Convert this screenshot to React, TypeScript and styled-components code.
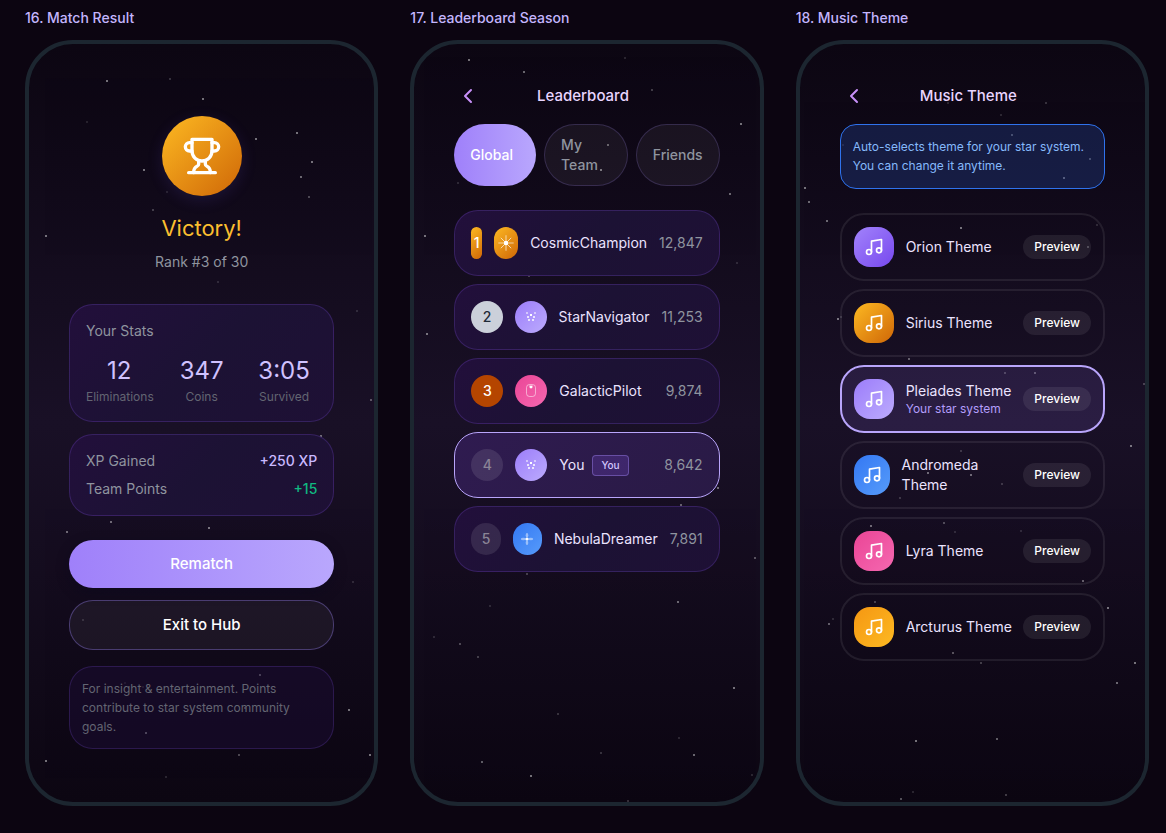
import React from 'react';
import styled, { createGlobalStyle, css } from 'styled-components';
import { ChevronLeft, Music } from 'lucide-react';

const GlobalStyle = createGlobalStyle`
  *, *::before, *::after { box-sizing: border-box; }
  body {
    margin: 0;
    background: #0c0511;
    color: #e9e2ff;
    font-family: Inter, "Liberation Sans", sans-serif;
    font-size: 14px;
    line-height: 20px;
    -webkit-font-smoothing: antialiased;
  }
  h1, h2, h3, p, ul, ol, dl, dd { margin: 0; padding: 0; font-weight: 400; }
  ul, ol { list-style: none; }
  button { border: 0; margin: 0; font: inherit; color: inherit; cursor: pointer; }
`;

const Board = styled.main`
  display: grid;
  grid-template-columns: repeat(3, minmax(0, 1fr));
  gap: 32px;
  padding: 8px 17px 24px 25px;
`;

const Screen = styled.section`
  display: flex;
  flex-direction: column;
  gap: 12px;
`;

const ScreenLabel = styled.h2`
  font-size: 14px;
  font-weight: 500;
  line-height: 20px;
  color: #c4b5fd;
`;

const Phone = styled.div`
  position: relative;
  aspect-ratio: 9 / 19.5;
  padding: 40px;
  border: 4px solid #1c2630;
  border-radius: 48px;
  overflow: hidden;
  background: linear-gradient(180deg, #0c0612 0%, #191026 50%, #0c0612 100%);
`;

const Sky = styled.svg`
  position: absolute;
  inset: 0;
  width: 100%;
  height: 100%;
  opacity: 0.85;
  pointer-events: none;
`;

const Content = styled.div`
  position: relative;
  display: flex;
  flex-direction: column;
`;

const panel = css`
  border: 1px solid rgba(139, 92, 246, 0.22);
  border-radius: 24px;
  background: linear-gradient(135deg, #220f3b 0%, #1c1234 50%, #1e1035 100%);
`;

/* Match result */

const Result = styled.div`
  display: flex;
  flex-direction: column;
  align-items: center;
  padding-top: 32px;
  margin-bottom: 32px;
`;

const Medal = styled.div`
  display: grid;
  place-items: center;
  width: 80px;
  height: 80px;
  margin-bottom: 16px;
  border-radius: 50%;
  background: linear-gradient(135deg, #fdb922, #cf6707);
  box-shadow: 0 4px 16px rgba(99, 80, 220, 0.16);
`;

const Victory = styled.h1`
  margin-bottom: 8px;
  font-size: 22px;
  line-height: 32px;
  color: #fbbf2f;
`;

const Muted = styled.p`
  color: #8f949f;
`;

const Card = styled.section`
  ${panel}
  padding: 16px;
  margin-bottom: 12px;
`;

const StatGrid = styled.dl`
  display: grid;
  grid-template-columns: repeat(3, minmax(0, 1fr));
  gap: 16px;
  margin-top: 14px;
`;

const Stat = styled.div`
  display: flex;
  flex-direction: column-reverse;
  gap: 2px;
  text-align: center;
`;

const StatValue = styled.dd`
  font-size: 24px;
  line-height: 32px;
  color: #d0c2ff;
`;

const StatLabel = styled.dt`
  font-size: 12px;
  line-height: 16px;
  color: #636572;
`;

const Gains = styled.dl`
  display: flex;
  flex-direction: column;
  gap: 8px;
`;

const Gain = styled.div`
  display: flex;
  justify-content: space-between;
  color: #8f949f;
`;

const GainValue = styled.dd<{ $positive?: boolean }>`
  font-weight: 500;
  color: ${(p) => (p.$positive ? '#10b981' : '#c9b9ff')};
`;

const Actions = styled.div`
  display: flex;
  flex-direction: column;
  gap: 12px;
  margin: 12px 0 16px;
`;

const ActionButton = styled.button<{ $primary?: boolean }>`
  padding: 12px 24px;
  border-radius: 24px;
  font-size: 15px;
  font-weight: 500;
  line-height: 24px;
  color: #fff;
  ${(p) =>
    p.$primary
      ? css`
          background: linear-gradient(90deg, #9f80fa, #b9a7fd);
          box-shadow: 0 4px 12px rgba(10, 8, 30, 0.5);
        `
      : css`
          border: 1px solid rgba(139, 116, 220, 0.42);
          background: rgba(255, 255, 255, 0.05);
        `}
`;

const Note = styled.p`
  padding: 12px;
  border: 1px solid rgba(139, 92, 246, 0.2);
  border-radius: 24px;
  background: rgba(28, 14, 56, 0.45);
  font-size: 12px;
  line-height: 19px;
  color: #636572;
`;

/* Shared screen header */

const Header = styled.header`
  display: flex;
  align-items: center;
  justify-content: space-between;
  margin-bottom: 16px;

  &::after {
    content: '';
    width: 36px;
  }
`;

const BackButton = styled.button`
  display: grid;
  place-items: center;
  width: 28px;
  height: 24px;
  padding: 0;
  background: none;
  color: #c890f8;
`;

const Title = styled.h1`
  font-size: 15px;
  font-weight: 500;
  line-height: 24px;
  color: #e9d5ff;
`;

/* Leaderboard */

const Tabs = styled.div`
  display: flex;
  gap: 8px;
  margin-bottom: 24px;
`;

const Tab = styled.button<{ $active?: boolean }>`
  flex: 1;
  padding: 10px 16px;
  border-radius: 31px;
  font-size: 14px;
  font-weight: 500;
  line-height: 20px;
  text-align: left;
  ${(p) =>
    p.$active
      ? css`
          background: linear-gradient(90deg, #9f80fa, #b9a7fd);
          color: #fff;
        `
      : css`
          border: 1px solid rgba(167, 139, 250, 0.2);
          background: rgba(255, 255, 255, 0.05);
          color: #8f949f;
        `}
`;

const List = styled.ol`
  display: flex;
  flex-direction: column;
  gap: 8px;
`;

const Player = styled.li<{ $self?: boolean }>`
  ${panel}
  display: flex;
  align-items: center;
  gap: 12px;
  padding: 16px;
  ${(p) =>
    p.$self &&
    css`
      border-color: #b9a5fb;
      background: linear-gradient(135deg, #2f1b50, #291a45);
    `}
`;

const rankStyles: Record<number, ReturnType<typeof css>> = {
  1: css`background: linear-gradient(135deg, #fdb922, #cf6707); color: #fff;`,
  2: css`background: #cbd0da; color: #1f2937;`,
  3: css`background: #b54500; color: #fff;`,
};

const Rank = styled.span<{ $rank: number }>`
  display: flex;
  align-items: center;
  justify-content: center;
  width: 32px;
  height: 32px;
  border-radius: 16px;
  font-weight: 500;
  ${(p) =>
    rankStyles[p.$rank] ??
    css`
      background: rgba(255, 255, 255, 0.1);
      color: #8a8496;
    `}
`;

const Avatar = styled.span<{ $fill: string }>`
  display: flex;
  align-items: center;
  justify-content: center;
  width: 32px;
  height: 32px;
  border-radius: 16px;
  background: ${(p) => p.$fill};

  svg { flex: none; }
`;

const PlayerName = styled.span`
  display: flex;
  flex: 1;
  align-items: center;
  gap: 8px;
  color: #ebe3ff;
`;

const YouTag = styled.span`
  padding: 2px 8px;
  border: 1px solid rgba(167, 139, 250, 0.4);
  border-radius: 4px;
  background: rgba(139, 92, 246, 0.2);
  font-size: 10px;
  font-weight: 500;
  line-height: 15px;
  color: #d4c6ff;
`;

const Score = styled.span`
  color: #8f949f;
`;

/* Music theme */

const Info = styled.p`
  min-height: 65px;
  padding: 12px;
  margin-bottom: 24px;
  border: 1px solid #2f72ec;
  border-radius: 16px;
  background: rgba(37, 70, 160, 0.32);
  font-size: 12px;
  line-height: 19px;
  color: #85b9fb;
`;

const ThemeRow = styled.li<{ $active?: boolean }>`
  display: flex;
  align-items: center;
  gap: 8px;
  padding: 12px;
  border: 2px solid ${(p) => (p.$active ? '#b9a5fb' : 'rgba(255, 255, 255, 0.08)')};
  border-radius: 24px;
  background: ${(p) => (p.$active ? 'rgba(139, 110, 230, 0.15)' : 'transparent')};
`;

const ThemeArt = styled.span<{ $fill: string }>`
  display: flex;
  align-items: center;
  justify-content: center;
  width: 40px;
  height: 40px;
  margin-right: 4px;
  border-radius: 16px;
  background: ${(p) => p.$fill};
  color: #fff;
`;

const ThemeText = styled.div`
  flex: 1 1 auto;
`;

const ThemeName = styled.h3`
  font-size: 14px;
  line-height: 20px;
  color: #ebe3ff;
`;

const ThemeHint = styled.p`
  font-size: 12px;
  line-height: 16px;
  color: #b39dfb;
`;

const PreviewButton = styled.button`
  padding: 4px 11px;
  border-radius: 12px;
  background: rgba(255, 255, 255, 0.08);
  font-size: 12px;
  font-weight: 500;
  line-height: 16px;
  color: #fff;
`;

const fills = {
  orion: 'linear-gradient(135deg, #a283fb, #7748ee)',
  sirius: 'linear-gradient(135deg, #fdb922, #cf6707)',
  pleiades: 'linear-gradient(135deg, #9c7dfa, #bcabfd)',
  andromeda: 'linear-gradient(135deg, #3478f3, #569bfa)',
  lyra: 'linear-gradient(135deg, #ea4596, #f568b0)',
  arcturus: 'linear-gradient(135deg, #f59712, #fdb922)',
};

type Star = [x: number, y: number, opacity: number];

const skies: Record<string, Star[]> = {
  result: [
    [77, 36, 0.5], [140, 34, 0.2], [173, 54, 0.5], [57, 77, 0.12], [267, 88, 0.5], [226, 94, 0.5],
    [282, 117, 0.5], [271, 132, 0.45], [279, 152, 0.3], [114, 125, 0.5], [137, 147, 0.12], [123, 165, 0.25],
    [16, 191, 0.5], [188, 237, 0.15], [194, 213, 0.35], [327, 266, 0.15], [341, 355, 0.35], [291, 391, 0.45],
    [81, 477, 0.45], [179, 483, 0.5], [37, 487, 0.45], [323, 537, 0.15], [53, 575, 0.15], [230, 630, 0.45],
    [95, 638, 0.12], [113, 642, 0.12], [215, 663, 0.4], [177, 663, 0.15], [319, 665, 0.5], [116, 688, 0.5],
    [63, 680, 0.15], [340, 710, 0.5], [209, 710, 0.3], [136, 732, 0.15], [16, 716, 0.5],
  ],
  leaderboard: [
    [54, 15, 0.5], [109, 27, 0.45], [210, 13, 0.15], [237, 45, 0.25], [326, 79, 0.5], [193, 100, 0.4],
    [186, 125, 0.5], [315, 149, 0.45], [43, 138, 0.15], [322, 218, 0.15], [114, 231, 0.25], [10, 191, 0.5],
    [12, 289, 0.5], [303, 443, 0.45], [266, 460, 0.4], [112, 529, 0.25], [340, 513, 0.35], [263, 557, 0.45],
    [75, 561, 0.15], [45, 599, 0.3], [19, 592, 0.15], [63, 612, 0.25], [319, 643, 0.5], [143, 669, 0.2],
    [264, 693, 0.15], [186, 708, 0.2], [279, 710, 0.45], [337, 730, 0.15], [67, 717, 0.4], [116, 731, 0.5],
    [213, 756, 0.2],
  ],
  music: [
    [245, 58, 0.2], [200, 70, 0.15], [147, 58, 0.15], [211, 90, 0.35], [289, 114, 0.35], [263, 133, 0.45],
    [42, 100, 0.12], [4, 143, 0.5], [8, 157, 0.45], [26, 176, 0.45], [160, 183, 0.5], [296, 180, 0.15],
    [287, 202, 0.25], [37, 274, 0.5], [40, 272, 0.15], [108, 314, 0.4], [204, 328, 0.25], [234, 328, 0.35],
    [343, 339, 0.25], [160, 406, 0.2], [127, 428, 0.45], [170, 430, 0.45], [201, 439, 0.2], [99, 453, 0.2],
    [70, 481, 0.45], [143, 478, 0.3], [154, 487, 0.15], [220, 486, 0.15], [282, 536, 0.4], [307, 563, 0.5],
    [74, 557, 0.25], [32, 574, 0.15], [28, 579, 0.4], [152, 608, 0.35], [180, 618, 0.25], [330, 401, 0.5],
    [316, 638, 0.45], [334, 618, 0.5], [115, 696, 0.5], [196, 694, 0.4], [100, 754, 0.35], [112, 747, 0.15],
    [205, 750, 0.25],
  ],
};

const StarField = ({ stars }: { stars: Star[] }) => (
  <Sky aria-hidden="true" shapeRendering="crispEdges">
    {stars.map(([x, y, opacity]) => (
      <rect key={`${x}-${y}`} x={x} y={y} width="2" height="2" fill="#fff" opacity={opacity} />
    ))}
  </Sky>
);

const TrophyIcon = () => (
  <svg width="40" height="40" viewBox="0 0 24 24" fill="none" stroke="#fff" strokeWidth="2" strokeLinecap="round" strokeLinejoin="round" aria-hidden="true">
    <path d="M6 9H4.5a2.5 2.5 0 0 1 0-5H6" />
    <path d="M18 9h1.5a2.5 2.5 0 0 0 0-5H18" />
    <path d="M4 22h16" />
    <path d="M10 14.66V17c0 .55-.47.98-.97 1.21C7.85 18.75 7 20.24 7 22" />
    <path d="M14 14.66V17c0 .55.47.98.97 1.21C16.15 18.75 17 20.24 17 22" />
    <path d="M18 2H6v7a6 6 0 0 0 12 0V2Z" />
  </svg>
);

type SystemName = 'sirius' | 'pleiades' | 'lyra' | 'andromeda';

const SystemIcon = ({ name }: { name: SystemName }) => (
  <svg width="24" height="24" viewBox="0 0 24 24" fill="#fff" aria-hidden="true">
    {name === 'sirius' && (
      <>
        <circle cx="12" cy="12" r="2.2" />
        <path d="M12 4.3v15.4M4.3 12h15.4" stroke="#fff" strokeWidth="1.6" opacity="0.4" />
        <path d="M6.8 6.8l10.4 10.4M17.2 6.8L6.8 17.2" stroke="#fff" strokeWidth="0.9" opacity="0.75" />
      </>
    )}
    {name === 'pleiades' && (
      <>
        <rect x="11" y="9" width="2" height="2" />
        <g opacity="0.5">
          <rect x="7" y="7" width="2" height="2" />
          <rect x="15" y="7" width="2" height="2" />
        </g>
        <g opacity="0.75">
          <rect x="8" y="11" width="2" height="2" />
          <rect x="14" y="11" width="2" height="2" />
          <rect x="9" y="14" width="2" height="2" />
          <rect x="13" y="14" width="2" height="2" />
        </g>
      </>
    )}
    {name === 'lyra' && (
      <>
        <rect x="7.5" y="5.5" width="9" height="12" rx="3" fill="none" stroke="#fff" strokeWidth="1" opacity="0.5" />
        <path d="M10.5 6v2.5M13.5 6v2.5" stroke="#fff" strokeWidth="0.7" opacity="0.4" />
        <circle cx="12" cy="8" r="1.4" />
      </>
    )}
    {name === 'andromeda' && (
      <>
        <g opacity="0.45">
          <ellipse cx="12" cy="8.3" rx="1.3" ry="2.3" />
          <ellipse cx="12" cy="15.7" rx="1.3" ry="2.3" />
          <ellipse cx="8.3" cy="12" rx="2.5" ry="1.3" />
          <ellipse cx="15.7" cy="12" rx="2.5" ry="1.3" />
        </g>
        <circle cx="12" cy="12" r="1.6" />
      </>
    )}
  </svg>
);

const ScreenHeader = ({ title }: { title: string }) => (
  <Header>
    <BackButton type="button" aria-label="Back">
      <ChevronLeft size={24} />
    </BackButton>
    <Title>{title}</Title>
  </Header>
);

const stats = [
  { label: 'Eliminations', value: '12' },
  { label: 'Coins', value: '347' },
  { label: 'Survived', value: '3:05' },
];

const players: { name: string; score: string; system: SystemName; self?: boolean }[] = [
  { name: 'CosmicChampion', score: '12,847', system: 'sirius' },
  { name: 'StarNavigator', score: '11,253', system: 'pleiades' },
  { name: 'GalacticPilot', score: '9,874', system: 'lyra' },
  { name: 'You', score: '8,642', system: 'pleiades', self: true },
  { name: 'NebulaDreamer', score: '7,891', system: 'andromeda' },
];

const themes = [
  { name: 'Orion Theme', fill: fills.orion },
  { name: 'Sirius Theme', fill: fills.sirius },
  { name: 'Pleiades Theme', fill: fills.pleiades, own: true },
  { name: 'Andromeda Theme', fill: fills.andromeda },
  { name: 'Lyra Theme', fill: fills.lyra },
  { name: 'Arcturus Theme', fill: fills.arcturus },
];

const MatchResult = () => (
  <Content>
    <Result>
      <Medal><TrophyIcon /></Medal>
      <Victory>Victory!</Victory>
      <Muted>Rank #3 of 30</Muted>
    </Result>
    <Card>
      <Muted>Your Stats</Muted>
      <StatGrid>
        {stats.map((s) => (
          <Stat key={s.label}>
            <StatLabel>{s.label}</StatLabel>
            <StatValue>{s.value}</StatValue>
          </Stat>
        ))}
      </StatGrid>
    </Card>
    <Card>
      <Gains>
        <Gain><dt>XP Gained</dt><GainValue>+250 XP</GainValue></Gain>
        <Gain><dt>Team Points</dt><GainValue $positive>+15</GainValue></Gain>
      </Gains>
    </Card>
    <Actions>
      <ActionButton type="button" $primary>Rematch</ActionButton>
      <ActionButton type="button">Exit to Hub</ActionButton>
    </Actions>
    <Note>For insight &amp; entertainment. Points contribute to star system community goals.</Note>
  </Content>
);

const Leaderboard = () => (
  <Content>
    <ScreenHeader title="Leaderboard" />
    <Tabs>
      <Tab type="button" $active>Global</Tab>
      <Tab type="button">My Team</Tab>
      <Tab type="button">Friends</Tab>
    </Tabs>
    <List>
      {players.map((p, i) => (
        <Player key={p.name} $self={p.self}>
          <Rank $rank={i + 1}>{i + 1}</Rank>
          <Avatar $fill={fills[p.system]}><SystemIcon name={p.system} /></Avatar>
          <PlayerName>
            {p.name}
            {p.self && <YouTag>You</YouTag>}
          </PlayerName>
          <Score>{p.score}</Score>
        </Player>
      ))}
    </List>
  </Content>
);

const MusicTheme = () => (
  <Content>
    <ScreenHeader title="Music Theme" />
    <Info>Auto-selects theme for your star system. You can change it anytime.</Info>
    <List as="ul">
      {themes.map((t) => (
        <ThemeRow key={t.name} $active={t.own}>
          <ThemeArt $fill={t.fill}><Music size={20} /></ThemeArt>
          <ThemeText>
            <ThemeName>{t.name}</ThemeName>
            {t.own && <ThemeHint>Your star system</ThemeHint>}
          </ThemeText>
          <PreviewButton type="button">Preview</PreviewButton>
        </ThemeRow>
      ))}
    </List>
  </Content>
);

const screens = [
  { label: '16. Match Result', stars: skies.result, body: <MatchResult /> },
  { label: '17. Leaderboard Season', stars: skies.leaderboard, body: <Leaderboard /> },
  { label: '18. Music Theme', stars: skies.music, body: <MusicTheme /> },
];

export default function App() {
  return (
    <>
      <GlobalStyle />
      <Board>
        {screens.map((s) => (
          <Screen key={s.label}>
            <ScreenLabel>{s.label}</ScreenLabel>
            <Phone>
              <StarField stars={s.stars} />
              {s.body}
            </Phone>
          </Screen>
        ))}
      </Board>
    </>
  );
}
